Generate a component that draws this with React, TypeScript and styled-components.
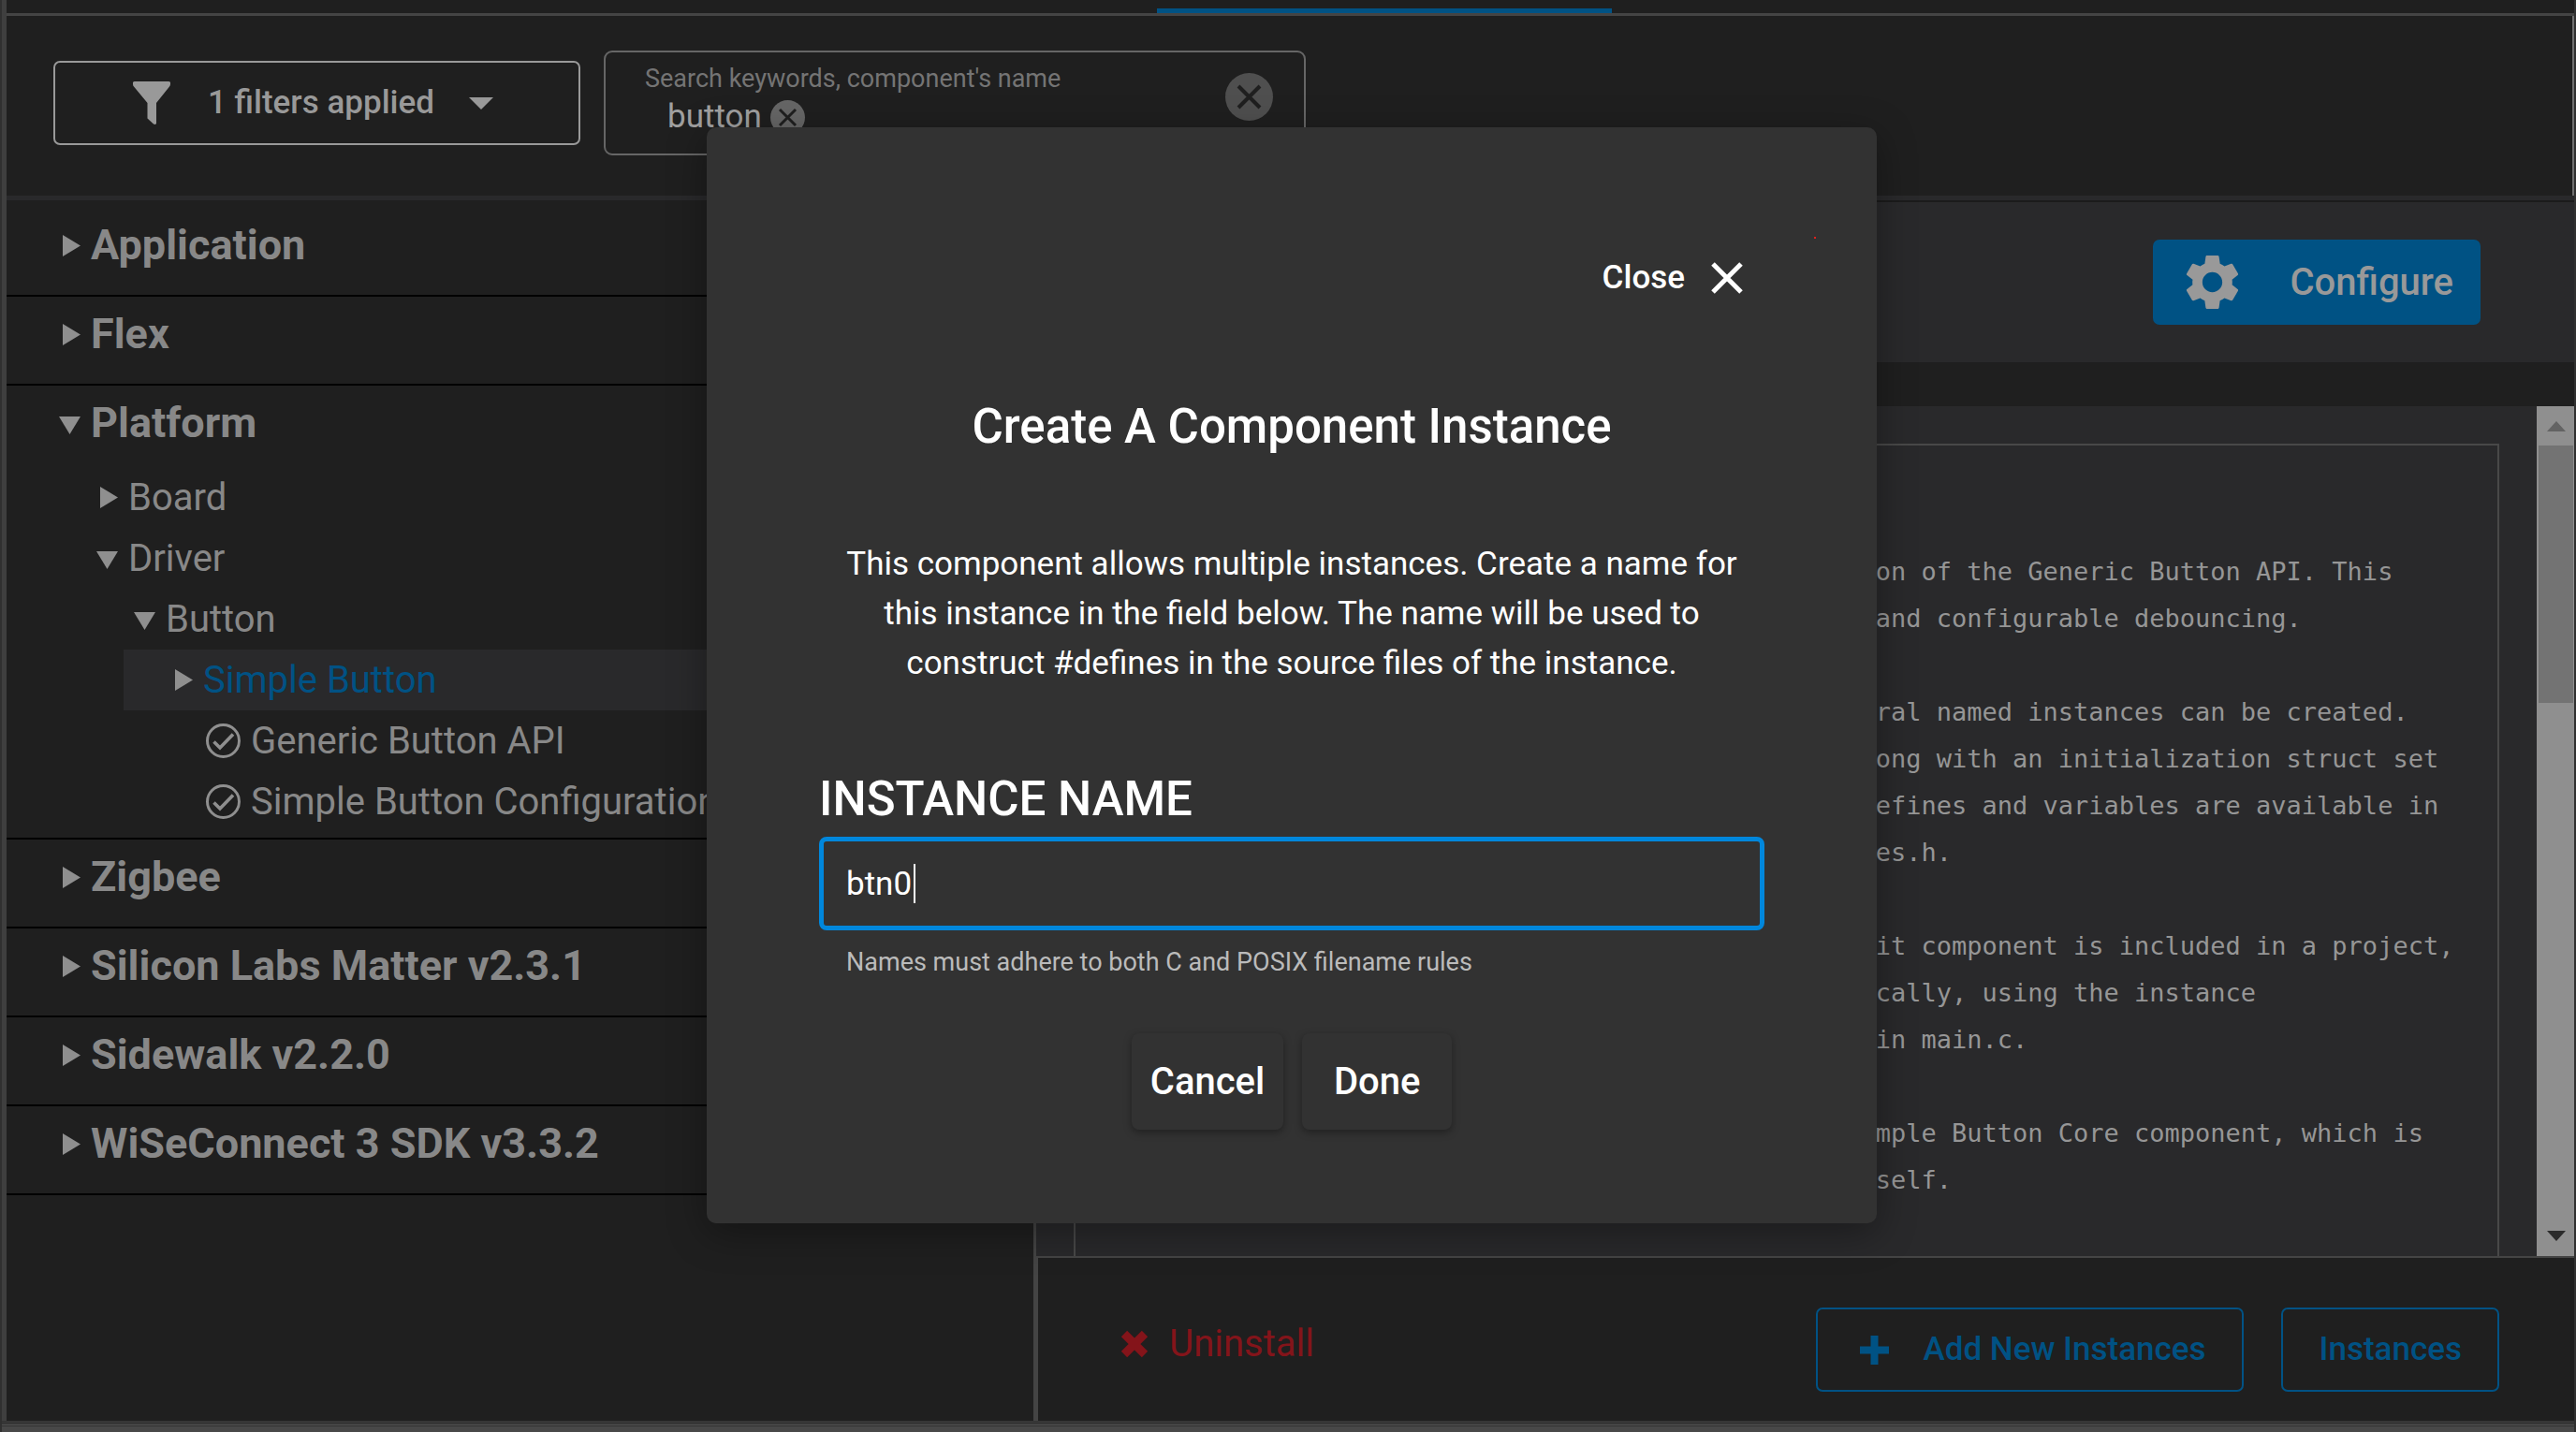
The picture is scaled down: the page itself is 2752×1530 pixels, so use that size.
import React from "react";
import styled, { createGlobalStyle, css } from "styled-components";
import { MdSettings } from "react-icons/md";

const color = {
  page: "#1f1f1f",
  panel: "#29292b",
  line: "#444444",
  muted: "#888888",
  soft: "#999999",
  blue: "#005284",
  red: "#84141a",
  modal: "#323232",
};

const GlobalStyle = createGlobalStyle`
  *, *::before, *::after { box-sizing: border-box; }
  body {
    margin: 0;
    background: #484848;
    font-family: Roboto, "Liberation Sans", sans-serif;
  }
  button, input { font: inherit; color: inherit; }
  button { padding: 0; border: 0; background: none; cursor: pointer; }
  h1, h2, p, ul, pre { margin: 0; padding: 0; }
  ul { list-style: none; }
`;

/* ---------- window ---------- */

const Frame = styled.div`
  display: flex;
  flex-direction: column;
  height: 100vh;
  overflow: hidden;
  border-left: 2px solid #303030;
  border-right: 2px solid #303030;
`;

const Page = styled.div`
  flex: 1;
  min-height: 0;
  display: flex;
  flex-direction: column;
  border-left: 5px solid #3f3f3f;
  background: ${color.page};
`;

const StatusEdge = styled.div`
  height: 12px;
  border-top: 4px solid #363636;
  background: linear-gradient(#555555 1px, #2e2e2e 1px, #2e2e2e 2px, #484848 2px);
`;

const TabStrip = styled.nav`
  display: flex;
  justify-content: center;
  align-items: flex-end;
  height: 17px;
  border-bottom: 3px solid ${color.line};
`;

const TabMarker = styled.span`
  width: 486px;
  height: 5px;
  margin-left: 200px;
  background: ${color.blue};
`;

/* ---------- toolbar ---------- */

const Toolbar = styled.header`
  display: flex;
  align-items: center;
  gap: 25px;
  padding: 37px 0 43px 50px;
  border-bottom: 5px solid ${color.panel};
  box-shadow: inset -2px 0 0 #6f6f6f;
`;

const FilterButton = styled.button`
  display: flex;
  align-items: center;
  width: 563px;
  height: 90px;
  padding-left: 83px;
  border: 2px solid ${color.soft};
  border-radius: 7px;
  color: ${color.soft};
  font-size: 35px;
  font-weight: 500;
  line-height: 40px;

  span { margin: 0 37px 0 40px; }
`;

const SearchBox = styled.div`
  display: flex;
  align-items: flex-start;
  width: 750px;
  height: 112px;
  padding: 12px 33px 0 42px;
  border: 2px solid #666666;
  border-radius: 9px;
`;

const SearchMain = styled.div`
  flex: 1;
  min-width: 0;
`;

const SearchLabel = styled.label`
  display: block;
  color: #747474;
  font-size: 27px;
  line-height: 32px;
`;

const ChipLine = styled.div`
  display: flex;
  align-items: center;
  gap: 9px;
  margin-top: 5px;
  padding-left: 24px;
  color: #a0a0a0;
  font-size: 35px;
  line-height: 40px;
`;

const SearchInput = styled.input`
  flex: 1;
  min-width: 0;
  height: 40px;
  padding: 0;
  border: 0;
  outline: 0;
  background: none;
`;

const RoundButton = styled.button<{ $size: number; $tone: string }>`
  display: block;
  flex: none;
  width: ${(p) => p.$size}px;
  height: ${(p) => p.$size}px;
  border-radius: 50%;
  background: ${(p) => p.$tone};
  color: ${color.page};

  svg { display: block; }
`;

const ClearSlot = styled.div`
  padding-top: 10px;
`;

/* ---------- body ---------- */

const Columns = styled.main`
  flex: 1;
  min-height: 0;
  display: grid;
  grid-template-columns: 40% 1fr;
`;

const Tree = styled.ul`
  min-width: 0;
  padding-top: 8px;
  color: ${color.muted};
`;

const Section = styled.li`
  padding-bottom: 6px;
  border-bottom: 2px solid #000000;
`;

const SectionHead = styled.button`
  display: flex;
  align-items: center;
  gap: 11px;
  width: 100%;
  padding: 14px 0 21px 56px;
  font-size: 45px;
  font-weight: 700;
  line-height: 52px;
  text-align: left;
`;

const Node = styled.button<{ $level: number; $leaf?: boolean; $selected?: boolean }>`
  display: flex;
  align-items: center;
  gap: 11px;
  width: calc(100% - ${(p) => 5 + p.$level * 40}px);
  height: 65px;
  margin-left: ${(p) => 5 + p.$level * 40}px;
  padding-left: ${(p) => (p.$leaf ? 48 : 51)}px;
  font-size: 40px;
  line-height: 48px;
  text-align: left;
  white-space: nowrap;
  ${(p) =>
    p.$selected &&
    css`
      background: ${color.panel};
      span { color: ${color.blue}; }
    `}
`;

const Detail = styled.section`
  min-width: 0;
  min-height: 0;
  display: flex;
  flex-direction: column;
  border-left: 3px solid ${color.line};
`;

const DetailHead = styled.div`
  display: flex;
  justify-content: flex-end;
  padding: 40px 100px 40px 0;
  border-top: 2px solid #1b1b1b;
  background: ${color.panel};
`;

const ConfigureButton = styled.button`
  display: flex;
  align-items: center;
  gap: 47px;
  height: 91px;
  padding: 0 29px 0 28px;
  border-radius: 7px;
  background: ${color.blue};
  color: ${color.soft};
  font-size: 40px;
  font-weight: 500;
  line-height: 48px;
`;

const DetailTabs = styled.div`
  height: 47px;
`;

const ScrollArea = styled.div`
  flex: 1;
  min-height: 0;
  display: flex;
  background: ${color.panel};
`;

const Document = styled.div`
  flex: 1;
  min-width: 0;
  overflow: hidden;
  padding: 40px 40px 0;
`;

const CodeCard = styled.pre`
  height: 1200px;
  padding: 110px 0 0 58px;
  border: 2px solid #484848;
  color: #969696;
  font-family: "DejaVu Sans Mono", "Liberation Mono", monospace;
  font-size: 27px;
  line-height: 50px;
`;

const ScrollBar = styled.div`
  flex: none;
  display: flex;
  flex-direction: column;
  width: 40px;
  padding: 0 1px 0 2px;
  background: #8f8f8f;
`;

const ScrollStep = styled.button<{ $tone: string; $low?: boolean }>`
  flex: none;
  display: flex;
  align-items: center;
  justify-content: center;
  height: 42px;
  padding-bottom: ${(p) => (p.$low ? 2 : 0)}px;
  color: ${(p) => p.$tone};
`;

const ScrollRail = styled.div`
  flex: 1;
`;

const ScrollThumb = styled.div`
  height: calc(100% / 3);
  background: #737373;
`;

const Footer = styled.footer`
  display: flex;
  align-items: flex-start;
  height: 176px;
  padding: 53px 80px 0 88px;
  border-top: 2px solid ${color.line};
  border-left: 2px solid ${color.line};
`;

const UninstallButton = styled.button`
  display: flex;
  align-items: center;
  gap: 22px;
  height: 78px;
  margin-right: auto;
  color: ${color.red};
  font-size: 40px;
  line-height: 48px;
`;

const OutlineButton = styled.button`
  display: flex;
  align-items: center;
  gap: 37px;
  height: 90px;
  margin-left: 40px;
  padding: 0 38px 0 39px;
  border: 2px solid ${color.blue};
  border-radius: 7px;
  color: ${color.blue};
  font-size: 35px;
  font-weight: 500;
  line-height: 40px;

  svg { margin-left: 6px; }
`;

/* ---------- dialog ---------- */

const Overlay = styled.div`
  position: absolute;
  inset: 0;
  display: flex;
  justify-content: center;
  align-items: flex-start;
  padding: 136px 0 0 8px;
`;

const Dialog = styled.form`
  position: relative;
  display: flex;
  flex-direction: column;
  width: 1250px;
  padding: 141px 120px 100px;
  border-radius: 10px;
  background: ${color.modal};
  box-shadow: 0 10px 40px rgba(0, 0, 0, 0.35);
  color: #ffffff;
`;

const RecordDot = styled.i`
  position: absolute;
  top: 117px;
  right: 65px;
  width: 2px;
  height: 2px;
  background: #e0201c;
`;

const CloseButton = styled.button`
  display: flex;
  align-items: center;
  gap: 28px;
  align-self: flex-end;
  margin-right: 23px;
  font-size: 35px;
  font-weight: 500;
  line-height: 40px;
`;

const Title = styled.h1`
  margin-top: 109px;
  font-size: 51px;
  font-weight: 500;
  line-height: 60px;
  text-align: center;
`;

const Message = styled.p`
  margin: 90px 20px 89px;
  font-size: 35px;
  line-height: 53px;
  text-align: center;
`;

const FieldLabel = styled.label`
  font-size: 51px;
  font-weight: 500;
  line-height: 60px;
  text-transform: uppercase;
`;

const Field = styled.div`
  position: relative;
  margin-top: 10px;
`;

const TextInput = styled.input`
  display: block;
  width: 100%;
  height: 100px;
  padding: 0 24px;
  border: 5px solid #0087dc;
  border-radius: 8px;
  outline: 0;
  background: none;
  caret-color: transparent;
  font-size: 35px;
`;

const Caret = styled.i`
  position: absolute;
  top: 29px;
  left: 101px;
  width: 2px;
  height: 42px;
  background: #ffffff;
`;

const Hint = styled.p`
  margin-top: 18px;
  padding-left: 29px;
  color: #bbbbbb;
  font-size: 27px;
  line-height: 32px;
`;

const Actions = styled.div`
  display: flex;
  justify-content: center;
  gap: 20px;
  margin-top: 60px;
`;

const ActionButton = styled.button`
  min-width: 160px;
  height: 103px;
  padding: 0 20px;
  border-radius: 8px;
  background: ${color.modal};
  box-shadow: 0 3px 8px rgba(0, 0, 0, 0.35);
  font-size: 40px;
  font-weight: 500;
  line-height: 48px;
`;

/* ---------- icons ---------- */

const Chevron = ({ open }: { open?: boolean }) => (
  <svg width="23" height="25" viewBox="0 0 23 25" fill="#8f8f8f" aria-hidden="true">
    <path d={open ? "M0 5H23L11.5 24Z" : "M4 1L23 12.5L4 24Z"} />
  </svg>
);

const CheckRing = () => (
  <svg width="37" height="37" viewBox="0 0 37 37" fill="none" stroke="#8f8f8f" strokeWidth="3" aria-hidden="true">
    <circle cx="18.5" cy="18.5" r="17" />
    <path d="M8.5 19.5L15 26L29 11.5" strokeWidth="3.6" />
  </svg>
);

const Funnel = () => (
  <svg width="40" height="46" viewBox="0 0 40 46" fill="currentColor" aria-hidden="true">
    <path d="M2 0H38Q40.500 0 40 3Q39.800 4.500 39 5.500L25 23V45Q24 46.500 22 45.500L15.500 39.500V23L1 5.500Q0 4.500 0 3Q-.5 0 2 0Z" />
  </svg>
);

const CaretDown = ({ w, h }: { w: number; h: number }) => (
  <svg width={w} height={h} viewBox="0 0 26 13" preserveAspectRatio="none" fill="currentColor" aria-hidden="true">
    <path d="M0 0H26L13 13Z" />
  </svg>
);

const CrossMark = ({ size, inset, stroke }: { size: number; inset: number; stroke: number }) => (
  <svg width={size} height={size} viewBox={`0 0 ${size} ${size}`} stroke="currentColor" strokeWidth={stroke} aria-hidden="true">
    <path d={`M${inset} ${inset}L${size - inset} ${size - inset}M${size - inset} ${inset}L${inset} ${size - inset}`} />
  </svg>
);

const Plus = () => (
  <svg width="31" height="31" viewBox="0 0 31 31" fill="currentColor" aria-hidden="true">
    <path d="M11.500 0h8v11.500H31v8H19.500V31h-8V19.500H0v-8h11.500Z" />
  </svg>
);

/* ---------- data ---------- */

type TreeNode = { label: string; level: number; kind: "open" | "closed" | "done"; selected?: boolean };

const sections: { label: string; nodes?: TreeNode[] }[] = [
  { label: "Application" },
  { label: "Flex" },
  {
    label: "Platform",
    nodes: [
      { label: "Board", level: 1, kind: "closed" },
      { label: "Driver", level: 1, kind: "open" },
      { label: "Button", level: 2, kind: "open" },
      { label: "Simple Button", level: 3, kind: "closed", selected: true },
      { label: "Generic Button API", level: 4, kind: "done" },
      { label: "Simple Button Configuration", level: 4, kind: "done" },
    ],
  },
  { label: "Zigbee" },
  { label: "Silicon Labs Matter v2.3.1" },
  { label: "Sidewalk v2.2.0" },
  { label: "WiSeConnect 3 SDK v3.3.2" },
];

const description = [
  "The Simple Button module provides an implementation of the Generic Button API. This",
  "module supports both interrupt and polling modes and configurable debouncing.",
  "",
  "The Simple Button module is instantiable and several named instances can be created.",
  "These instances get their own pin definitions, along with an initialization struct set",
  "up in the autogenerated source code. All of the defines and variables are available in",
  "the autogenerated header sl_simple_button_instances.h.",
  "",
  "If the Services -> Runtime -> System -> System Init component is included in a project,",
  "the button instances will be initialized automatically, using the instance",
  "names. Otherwise, they should all be initialized in main.c.",
  "",
  "Every Simple Button instance also requires the Simple Button Core component, which is",
  "pulled in along with the Simple Button package itself.",
].join("\n");

export default function App() {
  const [name, setName] = React.useState("btn0");
  const [query, setQuery] = React.useState("");

  return (
    <>
      <GlobalStyle />
      <Frame>
        <Page>
          <TabStrip>
            <TabMarker />
          </TabStrip>

          <Toolbar>
            <FilterButton type="button">
              <Funnel />
              <span>1 filters applied</span>
              <CaretDown w={26} h={13} />
            </FilterButton>
            <SearchBox>
              <SearchMain>
                <SearchLabel htmlFor="search">Search keywords, component's name</SearchLabel>
                <ChipLine>
                  button
                  <RoundButton type="button" $size={37} $tone="#666666" aria-label="Remove button">
                    <CrossMark size={37} inset={10} stroke={3} />
                  </RoundButton>
                  <SearchInput id="search" value={query} onChange={(e) => setQuery(e.target.value)} />
                </ChipLine>
              </SearchMain>
              <ClearSlot>
                <RoundButton type="button" $size={51} $tone="#4f4f4f" aria-label="Clear search">
                  <CrossMark size={51} inset={14} stroke={4} />
                </RoundButton>
              </ClearSlot>
            </SearchBox>
          </Toolbar>

          <Columns>
            <Tree>
              {sections.map((s) => (
                <Section key={s.label}>
                  <SectionHead type="button">
                    <Chevron open={!!s.nodes} />
                    {s.label}
                  </SectionHead>
                  {s.nodes?.map((n) => (
                    <Node
                      key={n.label}
                      type="button"
                      $level={n.level}
                      $leaf={n.kind === "done"}
                      $selected={n.selected}
                    >
                      {n.kind === "done" ? <CheckRing /> : <Chevron open={n.kind === "open"} />}
                      <span>{n.label}</span>
                    </Node>
                  ))}
                </Section>
              ))}
            </Tree>

            <Detail>
              <DetailHead>
                <ConfigureButton type="button">
                  <MdSettings size={71} />
                  Configure
                </ConfigureButton>
              </DetailHead>
              <DetailTabs />
              <ScrollArea>
                <Document>
                  <CodeCard>{description}</CodeCard>
                </Document>
                <ScrollBar>
                  <ScrollStep type="button" $tone="#636363" aria-label="Scroll up">
                    <svg width="20" height="11" viewBox="0 0 20 11" fill="currentColor" aria-hidden="true">
                      <path d="M0 11L10 0L20 11Z" />
                    </svg>
                  </ScrollStep>
                  <ScrollRail>
                    <ScrollThumb />
                  </ScrollRail>
                  <ScrollStep type="button" $tone="#2b2b2b" $low aria-label="Scroll down">
                    <CaretDown w={20} h={11} />
                  </ScrollStep>
                </ScrollBar>
              </ScrollArea>
              <Footer>
                <UninstallButton type="button">
                  <CrossMark size={30} inset={4} stroke={9} />
                  Uninstall
                </UninstallButton>
                <OutlineButton type="button">
                  <Plus />
                  Add New Instances
                </OutlineButton>
                <OutlineButton type="button">Instances</OutlineButton>
              </Footer>
            </Detail>
          </Columns>
        </Page>
        <StatusEdge />
      </Frame>

      <Overlay>
        <Dialog role="dialog" aria-labelledby="dialog-title" onSubmit={(e) => e.preventDefault()}>
          <RecordDot />
          <CloseButton type="button">
            Close
            <CrossMark size={34} inset={2} stroke={5} />
          </CloseButton>
          <Title id="dialog-title">Create A Component Instance</Title>
          <Message>
            This component allows multiple instances. Create a name for this instance in the field below. The name
            will be used to construct #defines in the source files of the instance.
          </Message>
          <FieldLabel htmlFor="instance">Instance name</FieldLabel>
          <Field>
            <TextInput id="instance" type="text" value={name} onChange={(e) => setName(e.target.value)} />
            <Caret />
          </Field>
          <Hint>Names must adhere to both C and POSIX filename rules</Hint>
          <Actions>
            <ActionButton type="button">Cancel</ActionButton>
            <ActionButton type="submit">Done</ActionButton>
          </Actions>
        </Dialog>
      </Overlay>
    </>
  );
}
